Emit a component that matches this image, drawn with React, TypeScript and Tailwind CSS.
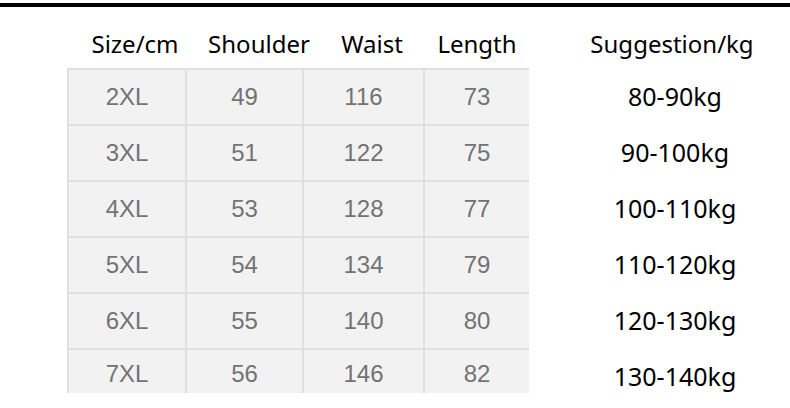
import React from "react";

const rows = [
  ["2XL", "49", "116", "73", "80-90kg"],
  ["3XL", "51", "122", "75", "90-100kg"],
  ["4XL", "53", "128", "77", "100-110kg"],
  ["5XL", "54", "134", "79", "110-120kg"],
  ["6XL", "55", "140", "80", "120-130kg"],
  ["7XL", "56", "146", "82", "130-140kg"],
];

const head = "flex justify-center text-[24px] leading-[24px] text-black whitespace-nowrap";

export default function App() {
  return (
    <div
      className="w-[790px] h-[408px] bg-white overflow-hidden"
      style={{ fontFamily: '"Noto Sans", "Open Sans", sans-serif' }}
    >
      <div className="mt-[3px] h-[4px] bg-black" />
      <div className="flex pl-[68px] pt-[25px] pb-[12px]">
        <div className={`${head} w-[134px]`}>Size/cm</div>
        <div className={`${head} w-[114px]`}>Shoulder</div>
        <div className={`${head} w-[112px]`}>Waist</div>
        <div className={`${head} w-[98px]`}>Length</div>
        <div className={`${head} ml-[58px] w-[176px] text-[24.5px]`}>Suggestion/kg</div>
      </div>
      <div className="flex">
        <div
          className="ml-[67px] h-[325px] overflow-hidden grid grid-cols-[116px_115px_119px_104px] grid-rows-[54px_54px_54px_54px_54px_47px] gap-[2px] bg-[#e0e0e0] pl-[2px] pt-[2px]"
          style={{ fontFamily: '"Liberation Sans", Arial, sans-serif' }}
        >
          {rows.map((r, i) =>
            r.slice(0, 4).map((c, j) => (
              <div
                key={`${i}-${j}`}
                className="bg-[#f2f2f3] flex items-center justify-center text-[24px] leading-[24px] text-[#737373]"
              >
                {c}
              </div>
            ))
          )}
        </div>
        <div className="ml-[56px] w-[180px] flex flex-col pt-[0px]">
          {rows.map((r, i) => (
            <div
              key={i}
              className="h-[56px] flex items-center justify-center text-[25px] leading-[25px] text-black whitespace-nowrap"
            >
              {r[4]}
            </div>
          ))}
        </div>
      </div>
    </div>
  );
}
